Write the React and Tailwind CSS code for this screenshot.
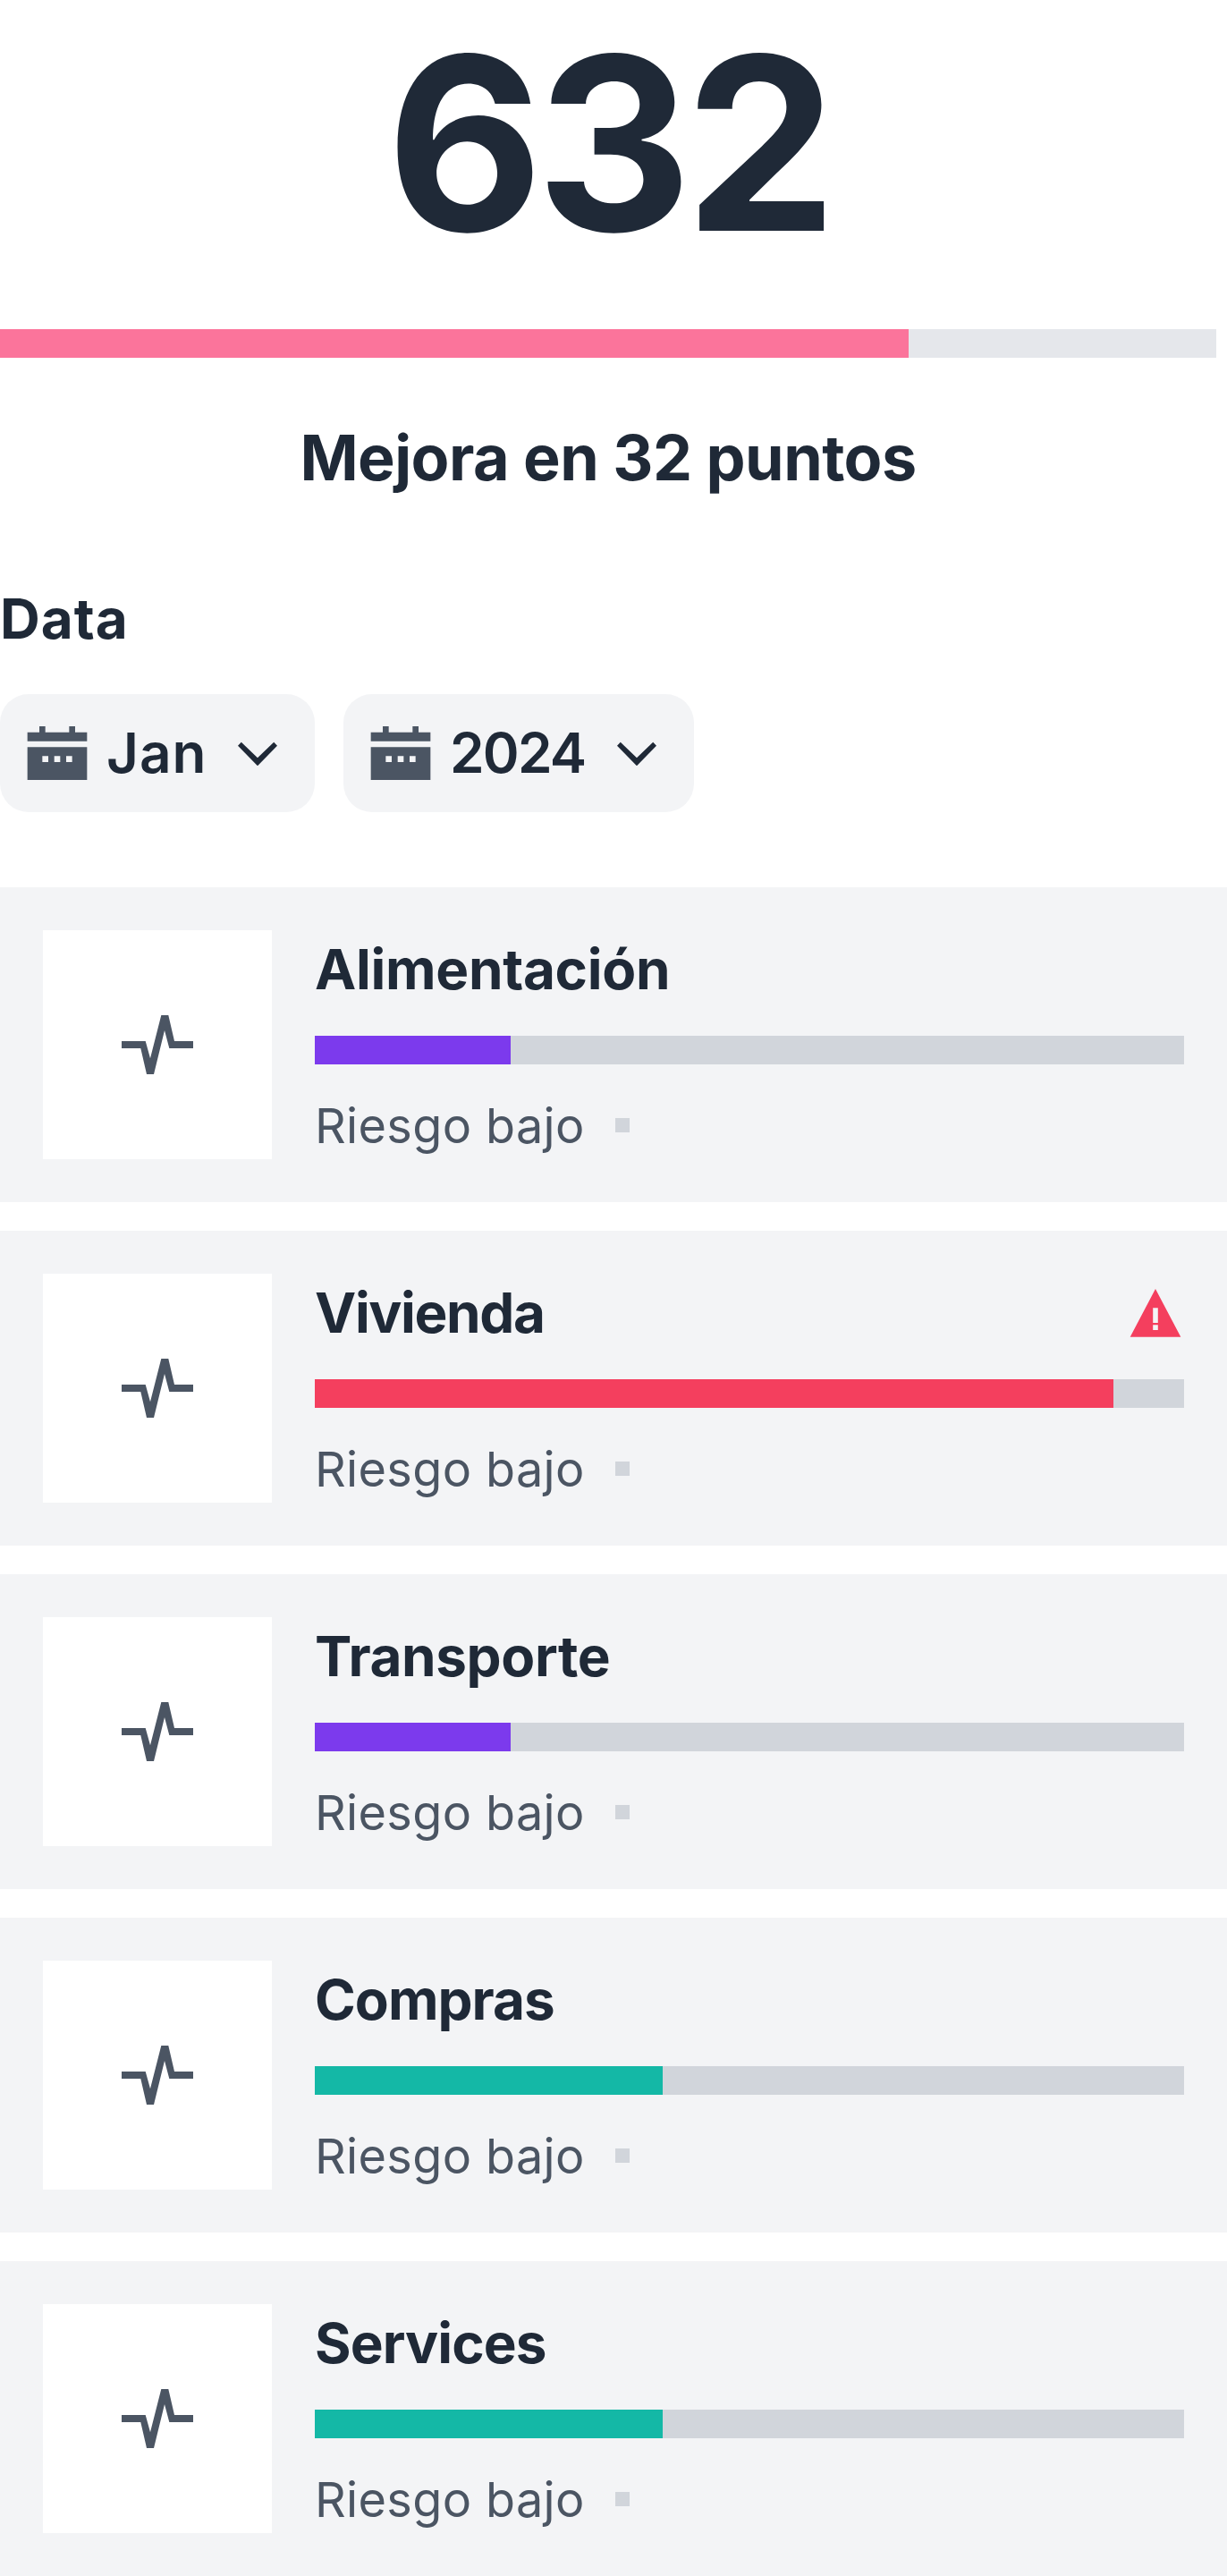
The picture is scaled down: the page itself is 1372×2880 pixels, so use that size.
import React from "react";

const categories = [
  { name: "Alimentación", value: 22.5, bar: "bg-[#7c3aed]", tracking: "tracking-[-0.3px]" },
  { name: "Vivienda", value: 91.9, bar: "bg-[#f43f5e]", tracking: "tracking-[-1.4px]", alert: true },
  { name: "Transporte", value: 22.5, bar: "bg-[#7c3aed]", tracking: "tracking-[-0.4px]" },
  { name: "Compras", value: 40, bar: "bg-[#14b8a6]", tracking: "tracking-[-1px]" },
  { name: "Services", value: 40, bar: "bg-[#14b8a6]", tracking: "tracking-[-0.9px]" },
];

function CalendarIcon() {
  return (
    <svg viewBox="0 0 24 24" className="size-20 shrink-0" fill="#4b5563" fillRule="evenodd">
      <path d="M6 3h2v2h8V3h2v2h4v3H2V5h4z" />
      <path d="M2 10h20v11H2zM7 13v2h2v-2zM11 13v2h2v-2zM15 13v2h2v-2z" />
    </svg>
  );
}

function ChevronIcon() {
  return (
    <svg viewBox="0 0 64 64" className="size-16 shrink-0" fill="#1f2937">
      <path d="M10 23.7 13.8 19.8 32 37.3 50.2 19.8 54 23.7 32 46.2z" />
    </svg>
  );
}

function PulseIcon() {
  return (
    <svg viewBox="0 0 96 96" className="size-24" fill="#4b5563">
      <path d="M8 44H34.7L40 63.3 52.3 15H60.3L67 44H88V52H61.3L56 32 44 81H36L29.3 52H8z" />
    </svg>
  );
}

function AlertIcon() {
  return (
    <svg viewBox="0 0 64 64" className="size-16" fill="#f43f5e" fillRule="evenodd">
      <path d="M32 5 60.3 58.7H3.7zM29.2 26.3V43h5.6V26.3zM29.2 45.3v5.6h5.6v-5.6z" />
    </svg>
  );
}

function Select({ label, className, tracking }) {
  return (
    <button className={`flex h-[132px] items-center rounded-[32px] bg-[#f3f4f6] pl-6 pr-8 ${className}`}>
      <CalendarIcon />
      <span className={`flex-1 pl-[15px] text-left text-[62px] leading-none font-semibold ${tracking}`}>
        {label}
      </span>
      <ChevronIcon />
    </button>
  );
}

function Category({ name, value, bar, tracking, alert }) {
  return (
    <li className="flex gap-12 bg-[#f3f4f6] p-12">
      <div className="flex size-64 shrink-0 items-center justify-center bg-white">
        <PulseIcon />
      </div>
      <div className="flex-1">
        <div className="flex h-[88px] items-center justify-between">
          <h3 className={`text-[62px] leading-[88px] font-bold ${tracking}`}>{name}</h3>
          {alert && <AlertIcon />}
        </div>
        <div className="mt-[30px] h-8 bg-[#d1d5db]">
          <div className={`h-full ${bar}`} style={{ width: `${value}%` }} />
        </div>
        <div className="mt-[30px] flex h-[76px] items-center text-[#4b5563]">
          <span className="w-[336px] pt-0.5 text-[54px] leading-[76px] tracking-[0.35px]">Riesgo bajo</span>
          <span className="size-4 bg-[#d1d5db]" />
        </div>
      </div>
    </li>
  );
}

export default function App() {
  return (
    <main className="h-[2880px] w-[1372px] bg-white font-['Inter',sans-serif] text-[#1f2937]">
      <section className="w-[1360px]">
        <div className="text-center text-[270px] leading-[320px] font-bold tracking-[-8px]">632</div>
        <div className="mt-12 h-8 bg-[#e5e7eb]">
          <div className="h-full w-[74.68%] bg-[#fb749b]" />
        </div>
        <p className="mt-14 text-center text-[70px] leading-[112px] font-bold tracking-[-0.55px]">
          Mejora en 32 puntos
        </p>
      </section>
      <section className="mt-[76px]">
        <h2 className="text-[62px] leading-[96px] font-bold tracking-[1px]">Data</h2>
        <div className="mt-9 flex gap-8">
          <Select label="Jan" className="w-[352px]" tracking="tracking-[1px]" />
          <Select label="2024" className="w-[392px]" tracking="tracking-[-1.8px]" />
        </div>
      </section>
      <ul className="mt-[84px] flex flex-col gap-8">
        {categories.map((c) => (
          <Category key={c.name} {...c} />
        ))}
      </ul>
    </main>
  );
}
